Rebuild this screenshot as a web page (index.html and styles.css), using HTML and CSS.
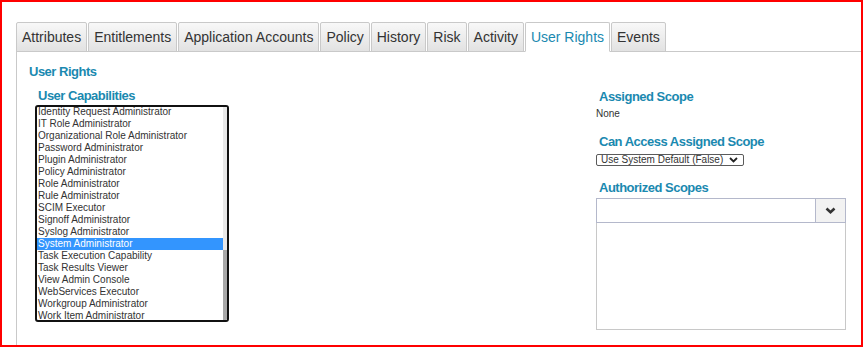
FILE: index.html
```html
<!DOCTYPE html>
<html>
<head>
    <title>User Rights</title>
<link rel="stylesheet" href="styles.css">
</head>
<body>
  <ul class="tabs">
    <li class="tab">Attributes</li>
    <li class="tab">Entitlements</li>
    <li class="tab">Application Accounts</li>
    <li class="tab">Policy</li>
    <li class="tab">History</li>
    <li class="tab">Risk</li>
    <li class="tab">Activity</li>
    <li class="tab active">User Rights</li>
    <li class="tab">Events</li>
  </ul>
  <div class="panel">
    <h2 class="title">User Rights</h2>
    <div class="columns">
      <div class="capabilities">
        <h3 class="label">User Capabilities</h3>
        <div class="listbox">
          <ul class="options">
            <li>Identity Request Administrator</li>
            <li>IT Role Administrator</li>
            <li>Organizational Role Administrator</li>
            <li>Password Administrator</li>
            <li>Plugin Administrator</li>
            <li>Policy Administrator</li>
            <li>Role Administrator</li>
            <li>Rule Administrator</li>
            <li>SCIM Executor</li>
            <li>Signoff Administrator</li>
            <li>Syslog Administrator</li>
            <li class="selected">System Administrator</li>
            <li>Task Execution Capability</li>
            <li>Task Results Viewer</li>
            <li>View Admin Console</li>
            <li>WebServices Executor</li>
            <li>Workgroup Administrator</li>
            <li>Work Item Administrator</li>
          </ul>
          <div class="scrollbar"><div class="thumb"></div></div>
        </div>
      </div>
      <div class="scopes">
        <h3 class="label">Assigned Scope</h3>
        <div class="value">None</div>
        <h3 class="label spaced">Can Access Assigned Scope</h3>
        <div class="select">
          <span>Use System Default (False)</span>
          <svg width="9" height="6" viewBox="0 0 9 6"><polyline points="1,1 4.5,4.5 8,1" fill="none" stroke="#222" stroke-width="1.8"/></svg>
        </div>
        <h3 class="label spaced">Authorized Scopes</h3>
        <div class="combo">
          <div class="combo-input"></div>
          <div class="combo-button">
            <svg width="11" height="7" viewBox="0 0 11 7"><polyline points="1.5,1.5 5.5,5.2 9.5,1.5" fill="none" stroke="#333" stroke-width="2.6"/></svg>
          </div>
        </div>
        <div class="combo-list"></div>
      </div>
    </div>
  </div>
</body>
</html>
```
FILE: styles.css
```css
html {
  height: 100%;
}
body {
  margin: 0;
  height: 100%;
  box-sizing: border-box;
  border: 2px solid #ff0000;
  display: flex;
  flex-direction: column;
  font-family: "Liberation Sans", Arial, sans-serif;
  color: #333;
  background-color: white;
}
.tabs {
  display: flex;
  align-items: flex-end;
  list-style: none;
  margin: 0;
  padding: 20px 0 0 14px;
}
.tab {
  margin-right: 1px;
  margin-bottom: -1px;
  padding: 6px 5px;
  font-size: 14px;
  line-height: 16px;
  color: #333;
  border: 1px solid #c9c9c9;
  border-radius: 2px 2px 0 0;
  background: linear-gradient(#f8f8f8, #e2e2e2);
}
.tab.active {
  position: relative;
  background: white;
  border-bottom-color: white;
  color: #1a89b0;
}
.panel {
  flex: 1;
  margin-left: 14px;
  padding: 12px 15px 0 12px;
  border-top: 1px solid #c9c9c9;
  border-left: 1px solid #c9c9c9;
}
.title,
.label {
  margin: 0;
  font-size: 13px;
  line-height: 15px;
  font-weight: bold;
  letter-spacing: -0.5px;
  color: #1a89b0;
}
.columns {
  display: flex;
  justify-content: space-between;
  margin-top: 9px;
}
.capabilities {
  margin-left: 6px;
}
.label {
  margin-left: 3px;
}
.capabilities .label {
  margin-bottom: 2px;
}
.listbox {
  display: flex;
  width: 194px;
  height: 217px;
  box-sizing: border-box;
  border: 2px solid #111;
  border-radius: 3px;
  overflow: hidden;
}
.options {
  flex: 1;
  list-style: none;
  margin: -1px 0 0 0;
  padding: 0;
  overflow: hidden;
}
.options li {
  height: 12px;
  padding-left: 1px;
  font-size: 10px;
  line-height: 12px;
  white-space: nowrap;
  color: #333;
}
.options li.selected {
  background-color: #3395fe;
  color: white;
}
.scrollbar {
  width: 4px;
  display: flex;
  flex-direction: column;
  background-color: #e8e8e8;
}
.thumb {
  margin-top: auto;
  height: 70px;
  background-color: #a8a8a8;
}
.scopes {
  width: 250px;
  padding-top: 1px;
}
.value {
  margin-top: 4px;
  font-size: 10px;
  line-height: 12px;
}
.spaced {
  margin-top: 14px;
}
.select {
  display: flex;
  align-items: center;
  width: 142px;
  height: 10px;
  margin-top: 5px;
  padding-left: 4px;
  border: 1px solid #5a5a5a;
  border-radius: 2px;
  font-size: 10px;
  line-height: 8px;
  color: #333;
}
.select svg {
  margin-left: 6px;
}
.scopes .spaced + .combo {
  margin-top: 3px;
}
.combo {
  display: flex;
  height: 23px;
  border: 1px solid #b4b8cb;
}
.combo-input {
  flex: 1;
}
.combo-button {
  width: 29px;
  display: flex;
  align-items: center;
  justify-content: center;
  border-left: 1px solid #b4b8cb;
  background-color: #f2f2f2;
}
.combo-list {
  height: 106px;
  border: 1px solid #c8c8c8;
  border-top: none;
}
```
